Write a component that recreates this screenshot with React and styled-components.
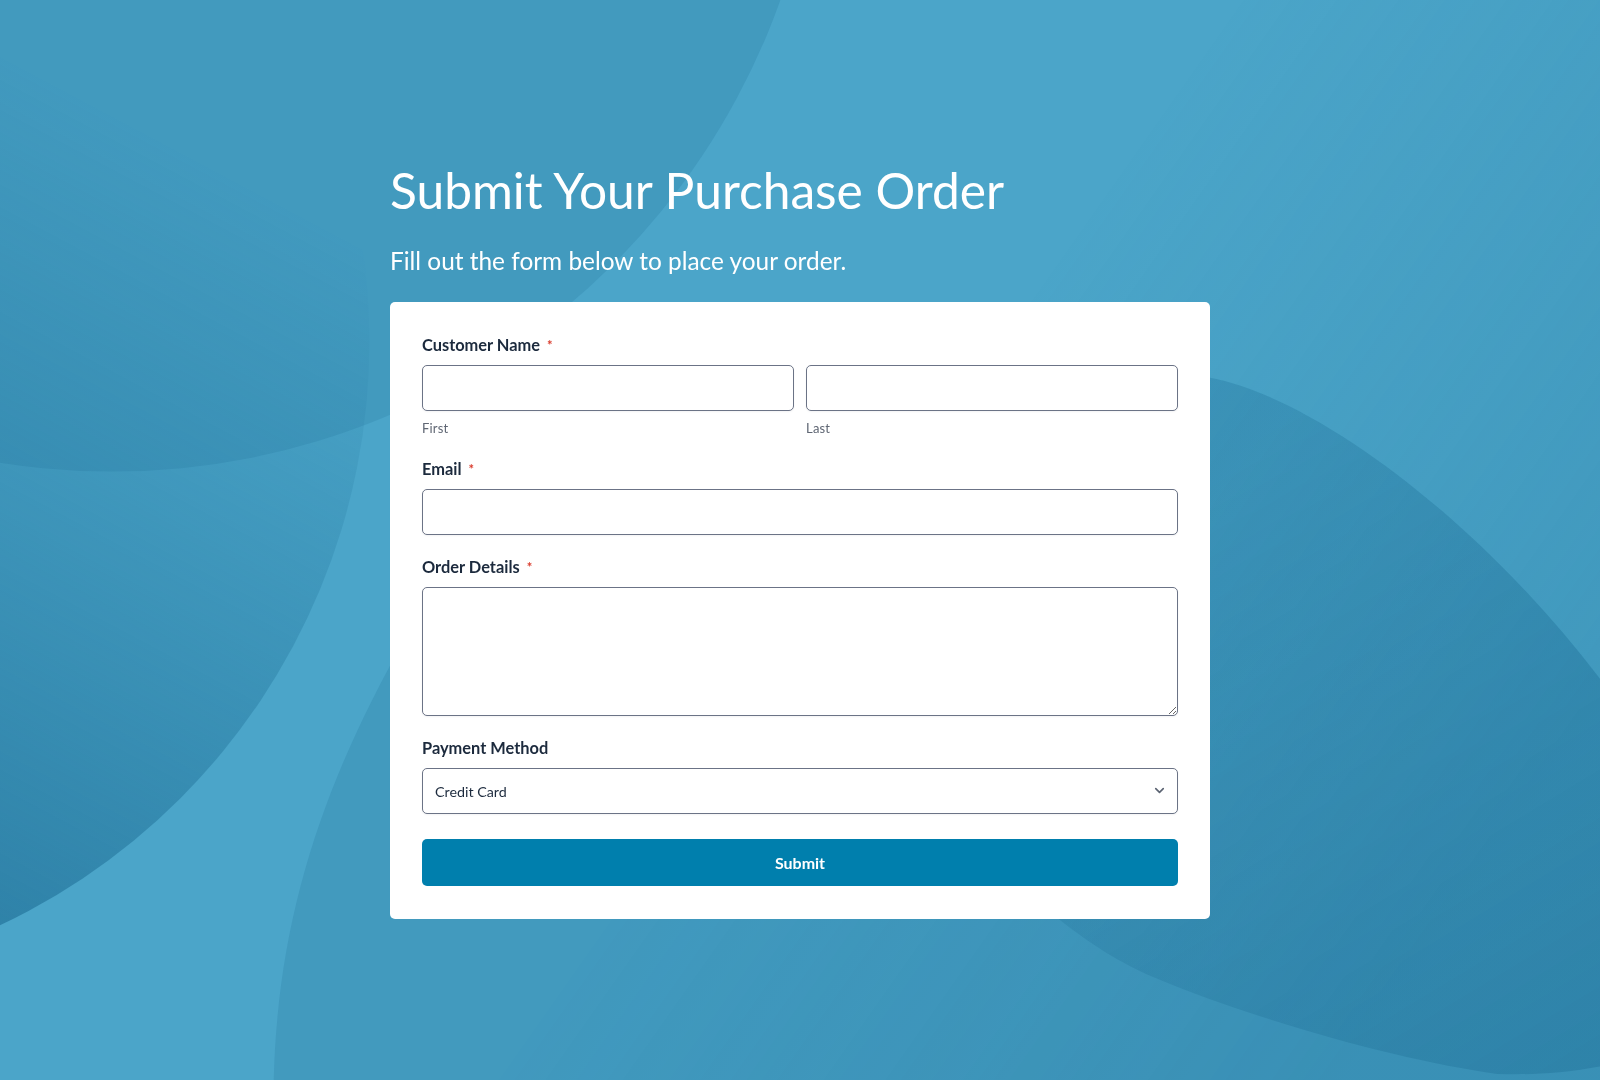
import React from 'react';
import styled, { createGlobalStyle } from 'styled-components';
import { ChevronDown } from 'lucide-react';

const GlobalStyle = createGlobalStyle`
    * {
        box-sizing: border-box;
    }
    html, body {
        margin: 0;
        padding: 0;
        background: #4ba5c9;
        font-family: Lato, "Open Sans", sans-serif;
    }
`;

const SHADE = '#1d6f96';

// Decorative blobs behind the form
const Backdrop = () => (
    <BackdropSvg viewBox="0 0 1568 1058" preserveAspectRatio="none">
        <defs>
            <linearGradient id="sheen" gradientUnits="userSpaceOnUse" x1="1000" y1="300" x2="1568" y2="700">
                <stop offset="0" stopColor={SHADE} stopOpacity="0" />
                <stop offset="1" stopColor={SHADE} stopOpacity="0.22" />
            </linearGradient>
            <linearGradient id="leftBlob" gradientUnits="userSpaceOnUse" x1="372" y1="250" x2="0" y2="950">
                <stop offset="0" stopColor={SHADE} stopOpacity="0" />
                <stop offset="1" stopColor="#1a6890" stopOpacity="0.6" />
            </linearGradient>
            <linearGradient id="rightBlob" gradientUnits="userSpaceOnUse" x1="1200" y1="450" x2="1568" y2="1058">
                <stop offset="0" stopColor={SHADE} stopOpacity="0.12" />
                <stop offset="1" stopColor="#1a6890" stopOpacity="0.34" />
            </linearGradient>
        </defs>
        <rect x="0" y="0" width="1568" height="1058" fill="url(#sheen)" />
        <circle cx="110" cy="-233" r="695" fill={SHADE} fillOpacity="0.2" />
        <circle cx="-270" cy="335" r="632" fill="url(#leftBlob)" />
        <path
            d="M 268 1080 C 268 900, 320 760, 400 620 L 1100 480 L 1186 370
               C 1290 390, 1450 510, 1568 665 L 1620 740 L 1620 1080 Z"
            fill={SHADE}
            fillOpacity="0.2"
        />
        <path
            d="M 700 700 C 800 480, 1000 350, 1186 370
               C 1290 390, 1450 510, 1568 665 L 1572 675 L 1572 1044
               C 1530 1052, 1500 1053, 1467 1052
               C 1380 1040, 1240 1003, 1130 957
               C 1090 940, 1060 918, 1036 899
               C 990 870, 940 840, 900 800 Z"
            fill="url(#rightBlob)"
        />
    </BackdropSvg>
);

const Field = ({ label, required, children }) => (
    <FieldGroup>
        <Label>
            {label}
            {required && <Required>*</Required>}
        </Label>
        {children}
    </FieldGroup>
);

const App = () => {
    const onSubmit = (e) => {
        e.preventDefault();
    };

    return (
        <>
            <GlobalStyle />
            <Backdrop />
            <Page>
                <Column>
                    <Title>Submit Your Purchase Order</Title>
                    <Subtitle>Fill out the form below to place your order.</Subtitle>
                    <Card onSubmit={onSubmit}>
                        <Field label="Customer Name" required>
                            <NameRow>
                                <div>
                                    <Input type="text" />
                                    <SubLabel>First</SubLabel>
                                </div>
                                <div>
                                    <Input type="text" />
                                    <SubLabel>Last</SubLabel>
                                </div>
                            </NameRow>
                        </Field>
                        <Field label="Email" required>
                            <Input type="email" />
                        </Field>
                        <Field label="Order Details" required>
                            <TextArea />
                        </Field>
                        <Field label="Payment Method">
                            <SelectWrap>
                                <Select defaultValue="credit">
                                    <option value="credit">Credit Card</option>
                                    <option value="paypal">PayPal</option>
                                    <option value="invoice">Invoice</option>
                                </Select>
                                <Chevron size={15} strokeWidth={2.6} />
                            </SelectWrap>
                        </Field>
                        <SubmitButton type="submit">Submit</SubmitButton>
                    </Card>
                </Column>
            </Page>
        </>
    );
};

export default App;

const BackdropSvg = styled.svg`
    position: fixed;
    inset: 0;
    width: 100%;
    height: 100%;
    z-index: 0;
    pointer-events: none;
`;

const Page = styled.div`
    position: relative;
    z-index: 1;
    min-height: 100vh;
    display: flex;
    justify-content: center;
    padding-top: 160px;
`;

const Column = styled.div`
    width: 820px;
    display: flex;
    flex-direction: column;
`;

const Title = styled.h1`
    margin: 0;
    font-size: 49.7px;
    font-weight: 400;
    line-height: 60px;
    color: #ffffff;
`;

const Subtitle = styled.p`
    margin: 26px 0 27px;
    font-size: 24.4px;
    line-height: 29px;
    color: #ffffff;
`;

const Card = styled.form`
    background: #ffffff;
    border-radius: 5px;
    padding: 32px 32px 33px;
    display: flex;
    flex-direction: column;
    gap: 21px;
`;

const FieldGroup = styled.div`
    display: flex;
    flex-direction: column;
`;

const Label = styled.label`
    font-size: 16.4px;
    font-weight: 700;
    line-height: 22px;
    color: #1c2a3d;
    margin-bottom: 9px;
`;

const Required = styled.span`
    color: #d93a2b;
    font-size: 13px;
    font-weight: 700;
    margin-left: 7px;
    vertical-align: 1px;
`;

const NameRow = styled.div`
    display: grid;
    grid-template-columns: 1fr 1fr;
    gap: 12px;
`;

const Input = styled.input`
    display: block;
    width: 100%;
    height: 46px;
    border: 1px solid #6b7386;
    border-radius: 5px;
    padding: 0 12px;
    font-family: Lato, sans-serif;
    font-size: 14px;
    color: #1c2a3d;
    background: #ffffff;
    box-shadow: 0 1px 2px rgba(16, 24, 40, 0.05);
    outline: none;
`;

const SubLabel = styled.div`
    margin-top: 8px;
    font-size: 13px;
    line-height: 18px;
    color: #5f6673;
    letter-spacing: 0.2px;
`;

const TextArea = styled.textarea`
    display: block;
    width: 100%;
    height: 129px;
    border: 1px solid #6b7386;
    border-radius: 5px;
    padding: 10px 12px;
    font-family: Lato, sans-serif;
    font-size: 14px;
    color: #1c2a3d;
    resize: vertical;
    box-shadow: 0 1px 2px rgba(16, 24, 40, 0.05);
    outline: none;
`;

const SelectWrap = styled.div`
    position: relative;
`;

const Select = styled.select`
    display: block;
    width: 100%;
    height: 46px;
    border: 1px solid #6b7386;
    border-radius: 5px;
    padding: 0 40px 0 12px;
    font-family: Lato, sans-serif;
    font-size: 14.3px;
    color: #1c2a3d;
    background: #ffffff;
    appearance: none;
    box-shadow: 0 1px 2px rgba(16, 24, 40, 0.05);
    outline: none;
`;

const Chevron = styled(ChevronDown)`
    position: absolute;
    right: 11px;
    top: 15px;
    color: #5b6372;
    pointer-events: none;
`;

const SubmitButton = styled.button`
    margin-top: 4px;
    height: 47px;
    border: none;
    border-radius: 5px;
    background: #007fad;
    color: #ffffff;
    font-family: Lato, sans-serif;
    font-size: 16px;
    font-weight: 700;
    cursor: pointer;
    :hover {
        background: #0074a0;
    }
`;
